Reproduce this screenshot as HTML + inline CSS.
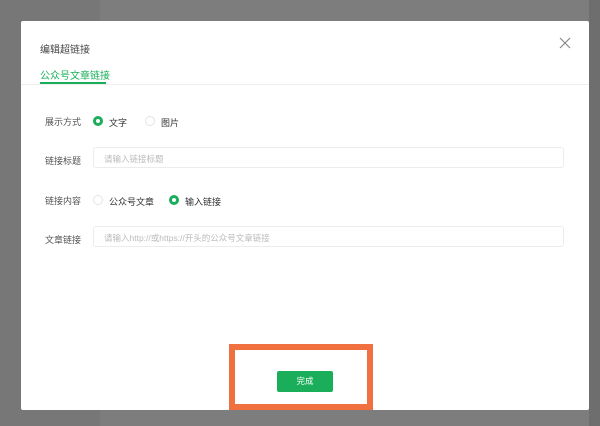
<!DOCTYPE html>
<html><head><meta charset="utf-8"><style>
*{margin:0;padding:0;box-sizing:border-box}
body{width:600px;height:426px;background:#7d7d7d;position:relative;overflow:hidden;font-family:"Liberation Sans","Noto Sans CJK SC",sans-serif;}
.strip{position:absolute;top:0;left:0;width:100px;height:426px;background:#777}
.rstrip{position:absolute;top:0;left:589px;width:11px;height:426px;background:#6e6e6e}
.modal{position:absolute;left:21px;top:21px;width:568px;height:389px;background:#fff;border-radius:2px}
.t{position:absolute;font-size:9px;color:#555;white-space:nowrap}
.radio{position:absolute;width:10px;height:10px;border-radius:50%;border:1px solid #e3e3e3;background:#fff}
.radio.on{border:3px solid #1aad5a}
.inp{position:absolute;left:72px;width:471px;height:21px;border:1px solid #ececec;border-radius:3px}
.ph{position:absolute;left:10px;top:5px;font-size:8.5px;color:#bbb;white-space:nowrap}
</style></head><body>
<div class="strip"></div><div class="rstrip"></div>
<div class="modal">
  <div class="t" style="left:19px;top:20px;font-size:10px;color:#444">编辑超链接</div>
  <svg style="position:absolute;left:538px;top:16px" width="12" height="12" viewBox="0 0 12 12"><path d="M1 1L11 11M11 1L1 11" stroke="#888" stroke-width="1.2"/></svg>
  <div class="t" style="left:19px;top:46px;font-size:10px;color:#1aad5a">公众号文章链接</div>
  <div style="position:absolute;left:19px;top:61px;width:66px;height:2px;background:#1aad5a"></div>
  <div style="position:absolute;left:0;top:63px;width:568px;height:1px;background:#eee"></div>

  <div class="t" style="left:24px;top:94px">展示方式</div>
  <div class="radio on" style="left:72px;top:95px"></div>
  <div class="t" style="left:88px;top:95px;color:#333">文字</div>
  <div class="radio" style="left:124px;top:95px"></div>
  <div class="t" style="left:140px;top:95px;color:#333">图片</div>

  <div class="t" style="left:24px;top:133px">链接标题</div>
  <div class="inp" style="top:126px"><div class="ph">请输入链接标题</div></div>

  <div class="t" style="left:24px;top:173px">链接内容</div>
  <div class="radio" style="left:72px;top:174px"></div>
  <div class="t" style="left:88px;top:174px;color:#333">公众号文章</div>
  <div class="radio on" style="left:148px;top:174px"></div>
  <div class="t" style="left:164px;top:174px;color:#333">输入链接</div>

  <div class="t" style="left:24px;top:212px">文章链接</div>
  <div class="inp" style="top:205px"><div class="ph">请输入http://或https://开头的公众号文章链接</div></div>
</div>
<div style="position:absolute;left:229px;top:344px;width:144px;height:66px;border:6px solid #f07040"></div>
<div style="position:absolute;left:277px;top:371px;width:56px;height:21px;background:#1aad5a;border-radius:2px;color:#fff;font-size:8.5px;text-align:center;line-height:21px">完成</div>
</body></html>
